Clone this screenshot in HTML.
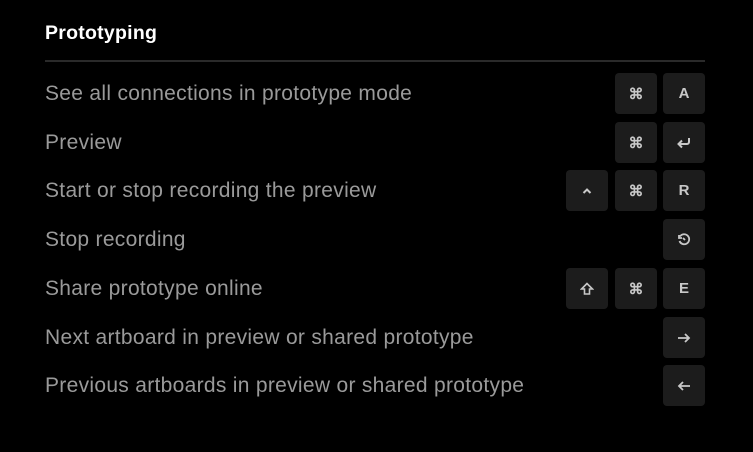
<!DOCTYPE html>
<html><head><style>
body{margin:0;background:#000;width:753px;height:452px;overflow:hidden;font-family:"Liberation Sans",sans-serif;position:relative}
.t{position:absolute;left:45px;top:22px;color:#fff;font-weight:bold;font-size:19.5px;letter-spacing:0.25px}
.hr{position:absolute;left:45px;top:60px;width:660px;height:2px;background:#2a2a2a}
.row{position:absolute;left:45px;width:660px;height:41px}
.row span{position:absolute;left:0;top:9px;color:#9a9a9a;font-size:21px;letter-spacing:0.3px;white-space:nowrap}
.k{position:absolute;top:0;width:42px;height:41px;background:#1c1c1c;border-radius:4px;color:#c8c8c8;font-weight:bold;font-size:15px;display:flex;align-items:center;justify-content:center}
.k1{left:521px}.k2{left:570px}.k3{left:618px}
</style></head><body>
<div class="t">Prototyping</div>
<div class="hr"></div>
<div class="row" style="top:73px"><span>See all connections in prototype mode</span><div class="k k2">⌘</div><div class="k k3">A</div></div>
<div class="row" style="top:122px"><span>Preview</span><div class="k k2">⌘</div><div class="k k3"><svg width="16" height="14" viewBox="0 0 16 14"><path d="M13 2v4a2 2 0 0 1-2 2H3M6 4.5L2.5 8 6 11.5" fill="none" stroke="#c8c8c8" stroke-width="2"/></svg></div></div>
<div class="row" style="top:170px"><span>Start or stop recording the preview</span><div class="k k1"><svg width="12" height="8" viewBox="0 0 12 8"><path d="M2.5 6L6 2.5 9.5 6" fill="none" stroke="#c8c8c8" stroke-width="2"/></svg></div><div class="k k2">⌘</div><div class="k k3">R</div></div>
<div class="row" style="top:219px"><span>Stop recording</span><div class="k k3"><svg width="14" height="14" viewBox="0 0 14 14"><path d="M3 3.5A5 5 0 1 1 2.5 8M2 2v3h3M6 5l2 2" fill="none" stroke="#c8c8c8" stroke-width="1.8"/></svg></div></div>
<div class="row" style="top:268px"><span>Share prototype online</span><div class="k k1"><svg width="14" height="14" viewBox="0 0 14 14"><path d="M7 1.5L1.5 7H4.5v5h5V7h3z" fill="none" stroke="#c8c8c8" stroke-width="1.6"/></svg></div><div class="k k2">⌘</div><div class="k k3">E</div></div>
<div class="row" style="top:317px"><span>Next artboard in preview or shared prototype</span><div class="k k3"><svg width="14" height="12" viewBox="0 0 14 12"><path d="M1 6h11M8 2l4 4-4 4" fill="none" stroke="#c8c8c8" stroke-width="1.8"/></svg></div></div>
<div class="row" style="top:365px"><span>Previous artboards in preview or shared prototype</span><div class="k k3"><svg width="14" height="12" viewBox="0 0 14 12"><path d="M13 6H2M6 2L2 6l4 4" fill="none" stroke="#c8c8c8" stroke-width="1.8"/></svg></div></div>
</body></html>
